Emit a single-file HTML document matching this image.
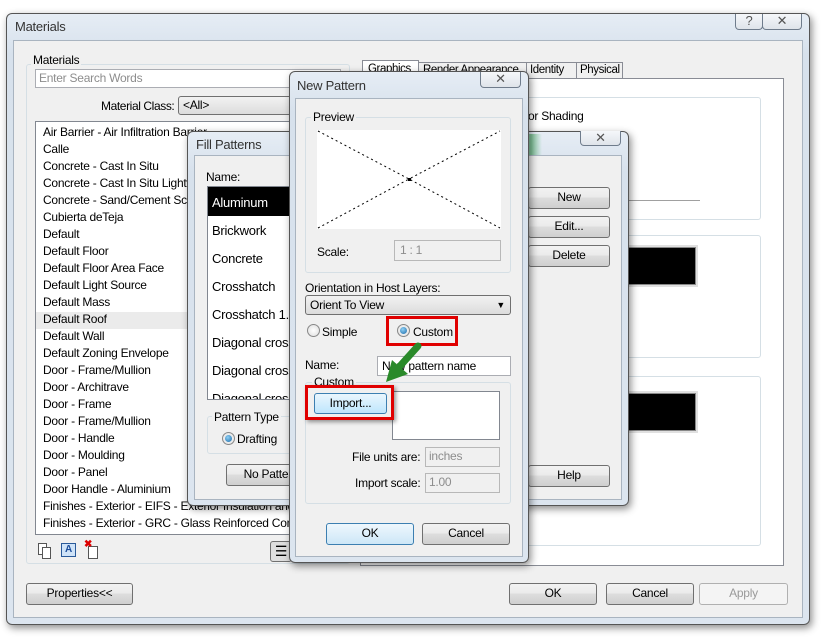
<!DOCTYPE html>
<html><head><meta charset="utf-8"><style>
*{box-sizing:border-box;margin:0;padding:0}
body{width:823px;height:637px;background:#fff;position:relative;overflow:hidden;font-family:"Liberation Sans",sans-serif;font-size:12px;letter-spacing:-0.25px;color:#000}
.a{position:absolute}
.win{position:absolute;border:1px solid #555;border-radius:6px;background:linear-gradient(#e6edf5,#d7e1ec 40px,#dce5ef);box-shadow:2px 3px 8px rgba(0,0,0,.45)}
.cl{position:absolute;background:#f0f0f0;border:1px solid #a9b4c0}
.btn{position:absolute;border:1px solid #707070;border-radius:3px;background:linear-gradient(#f2f2f2 0,#ebebeb 45%,#dddddd 50%,#cfcfcf 100%);text-align:center;line-height:19px}
.grp{position:absolute;border:1px solid #d5dfe5;border-radius:3px}
.lbl{position:absolute;background:#f0f0f0;padding:0 2px;line-height:12px}
.inp{position:absolute;background:#fff;border:1px solid #abadb3}
.dis{position:absolute;background:#f0f0f0;border:1px solid #b8b8b8;color:#8d8d8d;padding-left:3px;line-height:17px}
.tb{position:absolute;border:1px solid #6f7c8c;border-top:none;border-radius:0 0 4px 4px;background:linear-gradient(#f5f7fa,#dfe4ea);text-align:center;color:#555;font-size:13px;line-height:14px}
.radio{position:absolute;width:13px;height:13px;border-radius:50%;border:1px solid #888;background:radial-gradient(#fff,#ddd)}
.radio.on::after{content:"";position:absolute;left:2px;top:2px;width:7px;height:7px;border-radius:50%;background:radial-gradient(circle at 40% 35%,#8fd0f5,#1a6aa8)}
.li{position:absolute;left:7px;white-space:nowrap}
.tab{font-size:11.5px;letter-spacing:-0.4px;overflow:hidden;white-space:nowrap}
</style></head><body>

<div class="win" style="left:6px;top:13px;width:804px;height:612px"></div>
<div class="a" style="left:15px;top:19px;font-size:13px;color:#333">Materials</div>
<div class="tb" style="left:735px;top:14px;width:28px;height:16px">?</div>
<div class="tb" style="left:762px;top:14px;width:40px;height:16px">✕</div>
<div class="cl" style="left:13px;top:40px;width:790px;height:578px"></div>

<div class="grp" style="left:26px;top:64px;width:324px;height:500px"></div>
<div class="lbl" style="left:31px;top:54px">Materials</div>
<div class="inp" style="left:35px;top:69px;width:306px;height:19px;color:#8d8d8d;padding-left:3px;line-height:17px">Enter Search Words</div>
<div class="a" style="left:101px;top:99px;letter-spacing:-0.4px">Material Class:</div>
<div class="a" style="left:178px;top:96px;width:170px;height:19px;border:1px solid #707070;border-radius:3px;background:linear-gradient(#f2f2f2,#dcdcdc);padding-left:4px;line-height:17px">&lt;All&gt;</div>
<div class="inp" style="left:35px;top:121px;width:312px;height:414px;overflow:hidden;border-color:#828790">
 <div class="a" style="left:0;top:190px;width:312px;height:17px;background:#ebebeb"></div>
 <div class="li" style="top:3px">Air Barrier - Air Infiltration Barrier</div>
 <div class="li" style="top:20px">Calle</div>
 <div class="li" style="top:37px">Concrete - Cast In Situ</div>
 <div class="li" style="top:54px">Concrete - Cast In Situ Lightweight</div>
 <div class="li" style="top:71px">Concrete - Sand/Cement Screed</div>
 <div class="li" style="top:88px">Cubierta deTeja</div>
 <div class="li" style="top:105px">Default</div>
 <div class="li" style="top:122px">Default Floor</div>
 <div class="li" style="top:139px">Default Floor Area Face</div>
 <div class="li" style="top:156px">Default Light Source</div>
 <div class="li" style="top:173px">Default Mass</div>
 <div class="li" style="top:190px">Default Roof</div>
 <div class="li" style="top:207px">Default Wall</div>
 <div class="li" style="top:224px">Default Zoning Envelope</div>
 <div class="li" style="top:241px">Door -  Frame/Mullion</div>
 <div class="li" style="top:258px">Door - Architrave</div>
 <div class="li" style="top:275px">Door - Frame</div>
 <div class="li" style="top:292px">Door - Frame/Mullion</div>
 <div class="li" style="top:309px">Door - Handle</div>
 <div class="li" style="top:326px">Door - Moulding</div>
 <div class="li" style="top:343px">Door - Panel</div>
 <div class="li" style="top:360px">Door Handle - Aluminium</div>
 <div class="li" style="top:377px">Finishes - Exterior - EIFS - Exterior Insulation and Finish</div>
 <div class="li" style="top:394px">Finishes - Exterior - GRC -  Glass Reinforced Concrete</div>
</div>
<div class="a" style="left:38px;top:543px;width:9px;height:12px;border:1px solid #555;background:#fff"></div>
<div class="a" style="left:42px;top:547px;width:9px;height:12px;border:1px solid #555;background:#fff"></div>
<div class="a" style="left:61px;top:543px;width:15px;height:14px;border:1px solid #2a5a9a;background:#cfe3f8;color:#1a4c9a;font-size:10px;line-height:12px;text-align:center;font-weight:bold">A</div>
<div class="a" style="left:88px;top:546px;width:10px;height:13px;border:1px solid #555;background:#fff"></div>
<div class="a" style="left:84px;top:539px;color:#d00;font-size:10px;font-weight:bold">✖</div>
<div class="a" style="left:270px;top:541px;width:22px;height:21px;border:1px solid #707070;border-radius:3px;background:#dedede;font-size:14px;text-align:center;line-height:19px">☰</div>

<div class="a" style="left:360px;top:78px;width:424px;height:488px;background:#fff;border:1px solid #898c95"></div>
<div class="a tab" style="left:362px;top:60px;width:57px;height:19px;background:#fff;border:1px solid #898c95;border-bottom:none;padding:2px 5px">Graphics</div>
<div class="a tab" style="left:418px;top:62px;width:109px;height:17px;background:#f0f0f0;border:1px solid #898c95;padding:1px 4px">Render Appearance</div>
<div class="a tab" style="left:526px;top:62px;width:51px;height:17px;background:#f0f0f0;border:1px solid #898c95;padding:1px 3px">Identity</div>
<div class="a tab" style="left:576px;top:62px;width:47px;height:17px;background:#f0f0f0;border:1px solid #898c95;padding:1px 3px">Physical</div>
<div class="grp" style="left:520px;top:97px;width:241px;height:123px"></div>
<div class="a" style="left:528px;top:109px">or Shading</div>
<div class="a" style="left:600px;top:200px;width:100px;height:1px;background:#a0a0a0"></div>
<div class="grp" style="left:520px;top:235px;width:241px;height:123px"></div>
<div class="a" style="left:626px;top:247px;width:70px;height:38px;border:1px solid #888;background:#000;outline:2px solid #e0e0e0"></div>
<div class="grp" style="left:520px;top:376px;width:241px;height:170px"></div>
<div class="a" style="left:626px;top:393px;width:70px;height:38px;border:1px solid #888;background:#000;outline:2px solid #e0e0e0"></div>

<div class="btn" style="left:26px;top:583px;width:107px;height:22px">Properties&lt;&lt;</div>
<div class="btn" style="left:509px;top:583px;width:88px;height:22px">OK</div>
<div class="btn" style="left:606px;top:583px;width:88px;height:22px">Cancel</div>
<div class="btn" style="left:699px;top:583px;width:89px;height:22px;color:#9a9a9a;border-color:#b0b0b0;background:#f4f4f4">Apply</div>

<div class="win" style="left:187px;top:131px;width:442px;height:375px"></div>
<div class="a" style="left:520px;top:134px;width:22px;height:24px;background:linear-gradient(90deg,rgba(60,170,90,.0),rgba(60,170,90,.6),rgba(60,170,90,0))"></div>
<div class="a" style="left:196px;top:137px;font-size:13px;color:#333">Fill Patterns</div>
<div class="tb" style="left:580px;top:131px;width:41px;height:15px">✕</div>
<div class="cl" style="left:194px;top:155px;width:428px;height:345px"></div>
<div class="a" style="left:206px;top:170px">Name:</div>
<div class="inp" style="left:207px;top:186px;width:100px;height:214px;overflow:hidden;border-color:#828790;font-size:13px">
 <div class="a" style="left:0;top:0;width:100px;height:29px;background:#000"></div>
 <div class="li" style="top:8px;left:4px;color:#fff">Aluminum</div>
 <div class="li" style="top:36px;left:4px">Brickwork</div>
 <div class="li" style="top:64px;left:4px">Concrete</div>
 <div class="li" style="top:92px;left:4px">Crosshatch</div>
 <div class="li" style="top:120px;left:4px">Crosshatch 1.5</div>
 <div class="li" style="top:148px;left:4px">Diagonal cross</div>
 <div class="li" style="top:176px;left:4px">Diagonal cross</div>
 <div class="li" style="top:204px;left:4px">Diagonal cross</div>
</div>
<div class="grp" style="left:207px;top:416px;width:100px;height:38px"></div>
<div class="lbl" style="left:212px;top:411px">Pattern Type</div>
<div class="radio on" style="left:222px;top:432px"></div>
<div class="a" style="left:237px;top:432px">Drafting</div>
<div class="btn" style="left:226px;top:464px;width:90px;height:22px">No Pattern</div>
<div class="btn" style="left:528px;top:187px;width:82px;height:22px">New</div>
<div class="btn" style="left:528px;top:216px;width:82px;height:22px">Edit...</div>
<div class="btn" style="left:528px;top:245px;width:82px;height:22px">Delete</div>
<div class="btn" style="left:528px;top:465px;width:82px;height:22px">Help</div>

<div class="win" style="left:289px;top:71px;width:240px;height:492px"></div>
<div class="a" style="left:297px;top:78px;font-size:13px;color:#333">New Pattern</div>
<div class="tb" style="left:480px;top:72px;width:41px;height:16px">✕</div>
<div class="cl" style="left:295px;top:98px;width:228px;height:459px"></div>
<div class="grp" style="left:305px;top:117px;width:206px;height:156px"></div>
<div class="lbl" style="left:311px;top:111px">Preview</div>
<svg class="a" style="left:317px;top:130px" width="184" height="99"><rect width="184" height="99" fill="#fff"/><path d="M1 1L92 49L183 1M1 98L92 49L183 98" stroke="#000" stroke-width="1" stroke-dasharray="2,3" fill="none"/><rect x="91" y="48" width="3" height="3"/></svg>
<div class="a" style="left:317px;top:245px">Scale:</div>
<div class="dis" style="left:394px;top:240px;width:107px;height:21px;line-height:19px;padding-left:5px">1 : 1</div>
<div class="a" style="left:305px;top:281px">Orientation in Host Layers:</div>
<div class="a" style="left:305px;top:295px;width:206px;height:20px;border:1px solid #707070;border-radius:3px;background:linear-gradient(#f2f2f2,#dcdcdc);padding-left:4px;line-height:18px">Orient To View<span style="position:absolute;right:5px;font-size:9px">▼</span></div>
<div class="radio" style="left:307px;top:324px"></div>
<div class="a" style="left:322px;top:325px">Simple</div>
<div class="a" style="left:386px;top:316px;width:72px;height:30px;border:3px solid #e00000"></div>
<div class="radio on" style="left:397px;top:324px"></div>
<div class="a" style="left:413px;top:325px">Custom</div>
<div class="a" style="left:305px;top:358px">Name:</div>
<div class="inp" style="left:377px;top:356px;width:134px;height:20px;padding-left:4px;line-height:18px">New pattern name</div>
<div class="grp" style="left:305px;top:382px;width:206px;height:122px"></div>
<div class="lbl" style="left:312px;top:376px">Custom</div>
<div class="inp" style="left:392px;top:391px;width:108px;height:49px;border-color:#828790"></div>
<div class="a" style="left:305px;top:385px;width:89px;height:35px;border:3px solid #e00000;box-shadow:2px 2px 4px rgba(0,0,0,.4)"></div>
<div class="btn" style="left:314px;top:393px;width:73px;height:21px;border-color:#3c7fb1;background:linear-gradient(#eaf6fd,#bee6fd)">Import...</div>
<div class="a" style="left:352px;top:450px">File units are:</div>
<div class="dis" style="left:425px;top:447px;width:75px;height:20px">inches</div>
<div class="a" style="left:355px;top:476px">Import scale:</div>
<div class="dis" style="left:425px;top:473px;width:75px;height:20px">1.00</div>
<div class="btn" style="left:326px;top:523px;width:88px;height:22px;border-color:#3c7fb1;background:linear-gradient(#eef7fd,#cde7f7)">OK</div>
<div class="btn" style="left:422px;top:523px;width:88px;height:22px">Cancel</div>

<svg class="a" style="left:380px;top:340px" width="50" height="50"><path d="M38 6 L20 26" stroke="#2a8a2a" stroke-width="7" stroke-linecap="round"/><path d="M6 42 L12 20 L28 34 Z" fill="#2a8a2a"/></svg>

</body></html>
